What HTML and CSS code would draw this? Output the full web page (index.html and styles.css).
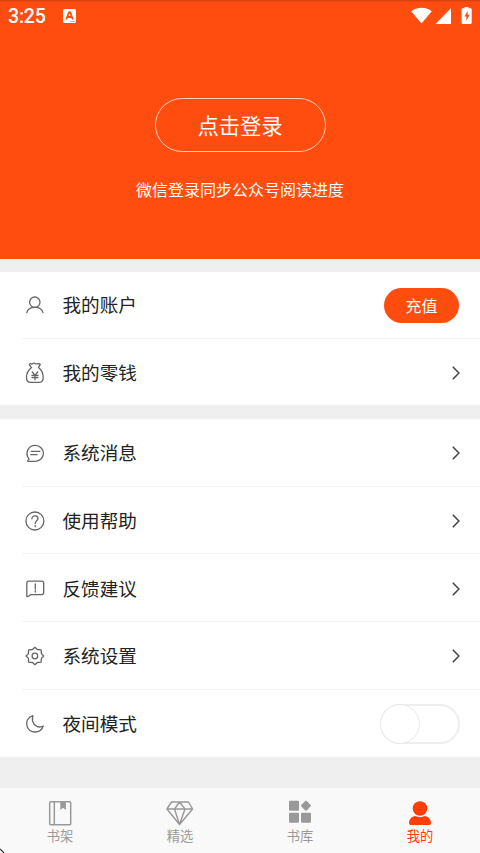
FILE: index.html
```html
<!DOCTYPE html>
<html lang="zh-CN">
<head>
<meta charset="utf-8">
<title>我的</title>
<link rel="stylesheet" href="styles.css">
</head>
<body>
<div class="app">
  <header class="hero">
    <div class="status">
      <span class="clock">3:25</span>
      <svg class="status-app" width="13" height="14" viewBox="0 0 13 14"><rect width="13" height="14" rx="1.5" fill="#fff"/><path d="M3.200 10.500L6 3.500h1.200l2.600 7M4.500 8h4.200" fill="none" stroke="#ff4d10" stroke-width="1.800"/><path d="M7 12.500h5" stroke="#ffa98c" stroke-width="1"/></svg>
      <svg class="status-icons" width="64" height="20" viewBox="0 0 64 20"><g fill="#fff"><path d="M1.200 5.300C6.500.6 16.500.6 21.800 5.300L11.500 17.600z"/><path d="M41 2.300v15.700H25.500z"/><path d="M53.400 1h4V2.200h1.800q1.300 0 1.300 1.300v13.200q0 1.300-1.300 1.300h-7.500q-1.300 0-1.300-1.300V3.500q0-1.300 1.300-1.300h1.700z" transform="translate(1.200 0)"/></g><path d="M57.700 5l-3.300 5.500h2v4l3.300-5.800h-2z" fill="#ff4d10"/></svg>
    </div>
    <button class="login">点击登录</button>
    <p class="hint">微信登录同步公众号阅读进度</p>
  </header>

  <section class="group group-account">
    <div class="row">
      <svg class="icon" viewBox="0 0 24 24"><circle cx="11.800" cy="9.200" r="5.200"/><path d="M3.800 19.600C4.600 16.200 8 14.400 11.800 14.400S19.100 16.200 20 19.600"/></svg>
      <span class="label">我的账户</span>
      <button class="recharge">充值</button>
    </div>
    <div class="row">
      <svg class="icon" viewBox="0 0 24 24"><path d="M8.600 6.600L6.400 3.900C6.100 2.700 7.400 2.500 8.300 2.900C9.300 3.300 9.600 2.300 10.800 2.200C12 2.100 12.300 2.700 13.200 2.900C14.500 3.100 16.800 2 17.200 3.500C17.200 4.500 15.800 5 15.500 6.600C18.500 9 20.200 12.500 20.200 16.500C20.200 20 18.800 21.300 16.500 21.300H7.500C5 21.300 3.500 20 3.500 16.500C3.500 12.500 5.400 9 8.600 6.600z"/><path d="M9.300 11l2.700 3.400 2.700-3.400M9 14.400h6M9 16.500h6M12 14.400v4.300"/></svg>
      <span class="label">我的零钱</span>
      <svg class="arrow" viewBox="0 0 8 14"><path d="M.8.800L6.900 7 .8 13.200"/></svg>
    </div>
  </section>

  <section class="group group-system">
    <div class="row">
      <svg class="icon" viewBox="0 0 24 24"><path d="M6 17.800C1.500 12.500 5 4.300 12.200 4.300C16.800 4.300 20.400 8 20.400 12.300C20.400 16.800 16.700 20.300 12.200 20.300H5.200C4.700 20.300 4.600 19.800 4.900 19.500z"/><path d="M8.300 10.400h8.500M7.800 13.700h6.200"/></svg>
      <span class="label">系统消息</span>
      <svg class="arrow" viewBox="0 0 8 14"><path d="M.8.800L6.900 7 .8 13.200"/></svg>
    </div>
    <div class="row">
      <svg class="icon" viewBox="0 0 24 24"><circle cx="11.900" cy="12" r="9"/><path d="M8.900 9.800C8.900 7.900 10.100 6.900 12 6.900C13.900 6.900 15 8 15 9.500C15 11.700 12.200 11.800 12.200 14.400M12.200 16.300v1.400"/></svg>
      <span class="label">使用帮助</span>
      <svg class="arrow" viewBox="0 0 8 14"><path d="M.8.800L6.900 7 .8 13.200"/></svg>
    </div>
    <div class="row">
      <svg class="icon" viewBox="0 0 24 24"><path d="M3.800 19.200V6.200Q3.800 4.100 5.900 4.100h12.700Q20.700 4.100 20.700 6.200v9.400Q20.700 17.700 18.600 17.700H7.500L5.200 19.400Q3.800 20.200 3.800 18.900z"/><path d="M12.300 6.800v5.200M12.300 13.700v1.300"/></svg>
      <span class="label">反馈建议</span>
      <svg class="arrow" viewBox="0 0 8 14"><path d="M.8.800L6.900 7 .8 13.200"/></svg>
    </div>
    <div class="row">
      <svg class="icon" viewBox="0 0 24 24"><path d="M11.900 3.200L14.300 5.500 18.100 5.800 18.400 9.600 20.700 12 18.400 14.400 18.100 18.200 14.300 18.500 11.900 20.800 9.500 18.500 5.700 18.200 5.400 14.400 3.100 12 5.400 9.600 5.700 5.800 9.500 5.500z"/><circle cx="11.900" cy="12" r="2.800"/></svg>
      <span class="label">系统设置</span>
      <svg class="arrow" viewBox="0 0 8 14"><path d="M.8.800L6.900 7 .8 13.200"/></svg>
    </div>
    <div class="row">
      <svg class="icon" viewBox="0 0 24 24"><path d="M9.900 3.700C4.800 5 2.300 10 4.200 14.700C6.800 21.500 17.500 22.200 20.200 14C15 16.800 7.500 12.500 9.900 3.700z"/></svg>
      <span class="label">夜间模式</span>
      <span class="toggle"><span class="knob"></span></span>
    </div>
  </section>

  <nav class="tabs">
    <div class="tab">
      <svg class="tab-icon" viewBox="0 0 28 28"><path d="M4.700 3.700h19q1 0 1 1v21q0 1-1 1h-19q-1 0-1-1v-21q0-1 1-1zM8.300 3.700v23" fill="none" stroke="#999" stroke-width="1.500"/><path d="M14.300 3.500h5.600v8.500l-2.800-2.200-2.800 2.200z" fill="#999"/></svg>
      <span>书架</span>
    </div>
    <div class="tab">
      <svg class="tab-icon" viewBox="0 0 28 28"><path d="M5.500 4h17l4.100 7L13.500 26.500.9 11zM.9 11h25.700M13.500 4L8.500 11 13.500 26.500 19 11z" fill="none" stroke="#999" stroke-width="1.400" stroke-linejoin="round"/></svg>
      <span>精选</span>
    </div>
    <div class="tab">
      <svg class="tab-icon" viewBox="0 0 28 28"><g fill="#999"><rect x="3" y="2.700" width="10" height="10" rx="1"/><rect x="3" y="14.700" width="10" height="10" rx="1"/><rect x="15" y="14.700" width="10" height="10" rx="1"/><rect x="16.100" y="3.800" width="7.700" height="7.700" rx="1" transform="rotate(45 19.950 7.650)"/></g></svg>
      <span>书库</span>
    </div>
    <div class="tab tab-active">
      <svg class="tab-icon" viewBox="0 0 28 28"><g fill="#ff3d08"><circle cx="14" cy="10.500" r="7.300"/><path d="M3 25C3 21.500 6 18.200 9.300 18.100C12.300 19.500 15.700 19.500 18.700 18.100C22 18.200 25 21.500 25 25q0 2-1.700 2H4.700Q3 27 3 25z"/></g></svg>
      <span>我的</span>
    </div>
    <svg class="corner" width="5" height="5" viewBox="0 0 5 5"><path d="M0 1L4 5" stroke="#333" stroke-width="1.200"/></svg>
  </nav>
</div>
</body>
</html>
```

FILE: styles.css
```css
* { box-sizing: border-box; }

body {
  margin: 0;
  background: #efefef;
  color: #222;
  font-family: "Noto Sans CJK SC", sans-serif;
}

button {
  padding: 0;
  font: inherit;
  color: #fff;
}

.app {
  display: flex;
  flex-direction: column;
  width: 480px;
  height: 853px;
  overflow: hidden;
}

.hero {
  display: flex;
  flex-direction: column;
  align-items: center;
  height: 258.700px;
  background: linear-gradient(#c73d0e 0, #ea470f 1px, #ff4d10 3px);
  color: #fff;
}

.status {
  display: flex;
  align-items: center;
  width: 100%;
  height: 32px;
  padding: 0 8px;
}

.clock {
  width: 55px;
  font: 500 19.500px/33px Roboto, sans-serif;
  letter-spacing: -.2px;
}

.status-icons {
  margin-left: auto;
  margin-right: -2px;
}

.login {
  width: 171px;
  height: 54px;
  margin-top: 66px;
  border: 1px solid #ffd0bf;
  border-radius: 27px;
  background: none;
  font-size: 21.300px;
  line-height: 52px;
}

.hint {
  margin: 25px 0 0;
  font-size: 16px;
  line-height: 24px;
}

.group {
  background: #fff;
  padding-left: 22px;
}

.group-account { margin-top: 13.300px; }
.group-system { margin-top: 13.500px; }

.row {
  display: flex;
  align-items: center;
  height: 67.700px;
  padding-right: 20px;
  border-bottom: 1px solid #f4f4f4;
}

.group-account .row {
  height: 66.700px;
  padding-top: 1px;
}

.group-system .row { padding-top: 2px; }
.row:last-child { border-bottom: 0; }

.icon {
  width: 24px;
  height: 24px;
  margin-left: 1px;
  fill: none;
  stroke: #666;
  stroke-width: 1.300;
  stroke-linejoin: round;
  stroke-linecap: round;
}

.label {
  flex: 1;
  margin: 0 0 2px 15.500px;
  font-size: 18.600px;
  line-height: 28px;
}

.arrow {
  width: 8px;
  height: 14px;
  fill: none;
  stroke: #444;
  stroke-width: 1.500;
}

.recharge {
  width: 75px;
  height: 35px;
  margin-right: 1px;
  border: 0;
  border-radius: 18px;
  background: #ff4d10;
  font-size: 16px;
  line-height: 33px;
}

.toggle {
  width: 80px;
  height: 40px;
  border: 2px solid #eee;
  border-radius: 20px;
}

.knob {
  display: block;
  width: 40px;
  height: 40px;
  margin: -2px 0 0 -2px;
  border: 1px solid #e9e9e9;
  border-radius: 50%;
  background: #fff;
}

.tabs {
  position: relative;
  display: flex;
  height: 65.500px;
  margin-top: auto;
  background: #f9f9f9;
}

.tab {
  display: flex;
  flex: 1;
  flex-direction: column;
  align-items: center;
  padding-top: 10px;
  color: #999;
  font-size: 13.300px;
  line-height: 20px;
}

.tab-icon {
  width: 28px;
  height: 28px;
}

.tab-active { color: #ff3d08; }

.corner {
  position: absolute;
  left: 0;
  bottom: 0;
}
```
